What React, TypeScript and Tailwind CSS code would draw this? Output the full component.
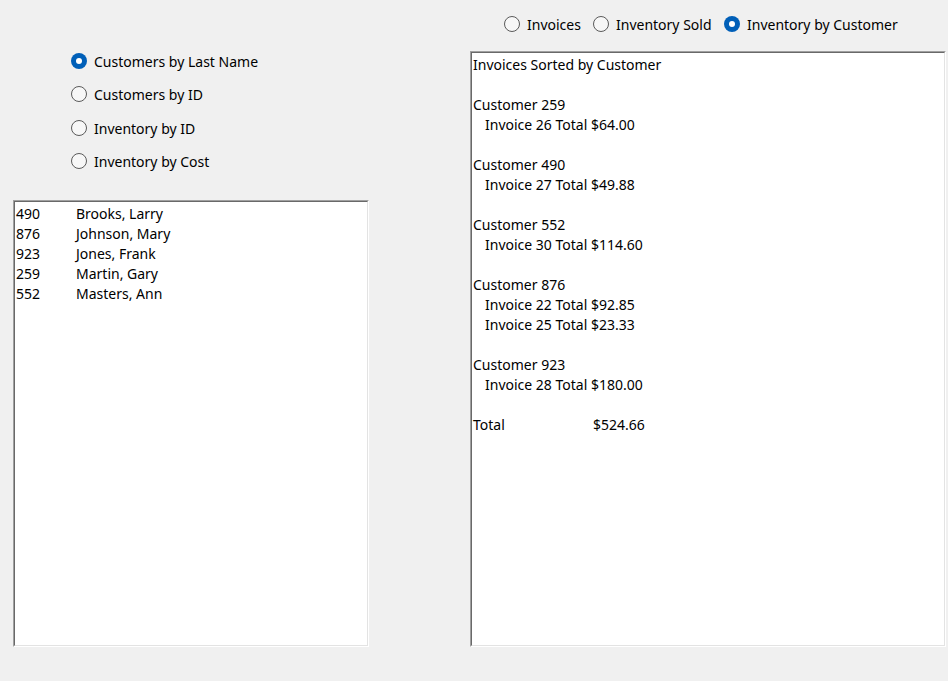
import React from "react";

function Radio({ checked, label, className = "" }: { checked?: boolean; label: string; className?: string }) {
  return (
    <div className={"flex items-center h-[20px] " + className}>
      {checked ? (
        <span className="w-[16px] h-[16px] rounded-full bg-[#005fb8] flex items-center justify-center shrink-0">
          <span className="w-[6px] h-[6px] rounded-full bg-white" />
        </span>
      ) : (
        <span className="w-[16px] h-[16px] rounded-full border border-[#5a5a5a] bg-[#f7f7f7] shrink-0" />
      )}
      <span className="ml-[7px] mt-[2px] whitespace-nowrap">{label}</span>
    </div>
  );
}

function Box({ className = "", children }: { className?: string; children?: React.ReactNode }) {
  return (
    <div className={"border border-t-[#a0a0a0] border-l-[#a0a0a0] border-r-white border-b-white " + className}>
      <div className="w-full h-full border border-t-[#696969] border-l-[#696969] border-r-[#e3e3e3] border-b-[#e3e3e3] bg-white px-[1px] pt-[2px]">
        {children}
      </div>
    </div>
  );
}

const customers = [
  ["490", "Brooks, Larry"],
  ["876", "Johnson, Mary"],
  ["923", "Jones, Frank"],
  ["259", "Martin, Gary"],
  ["552", "Masters, Ann"],
];

export default function App() {
  const lines: React.ReactNode[] = [
    <div key="h">Invoices Sorted by Customer</div>,
    <div key="e1">&nbsp;</div>,
    <div key="c1">Customer 259</div>,
    <div key="i1" className="pl-[12px]">Invoice 26 Total $64.00</div>,
    <div key="e2">&nbsp;</div>,
    <div key="c2">Customer 490</div>,
    <div key="i2" className="pl-[12px]">Invoice 27 Total $49.88</div>,
    <div key="e3">&nbsp;</div>,
    <div key="c3">Customer 552</div>,
    <div key="i3" className="pl-[12px]">Invoice 30 Total $114.60</div>,
    <div key="e4">&nbsp;</div>,
    <div key="c4">Customer 876</div>,
    <div key="i4" className="pl-[12px]">Invoice 22 Total $92.85</div>,
    <div key="i5" className="pl-[12px]">Invoice 25 Total $23.33</div>,
    <div key="e5">&nbsp;</div>,
    <div key="c5">Customer 923</div>,
    <div key="i6" className="pl-[12px]">Invoice 28 Total $180.00</div>,
    <div key="e6">&nbsp;</div>,
    <div key="t" className="flex">
      <span className="w-[120px]">Total</span>
      <span>$524.66</span>
    </div>,
  ];
  return (
    <div
      className="w-[948px] h-[681px] bg-[#f0f0f0] flex text-[14px] leading-[20px] text-black"
      style={{ fontFamily: '"Noto Sans", "Open Sans", sans-serif' }}
    >
      <div className="ml-[13px] w-[356px] flex flex-col">
        <div className="pl-[58px] mt-[51px] flex flex-col">
          <Radio checked label="Customers by Last Name" />
          <Radio label="Customers by ID" className="mt-[13px]" />
          <Radio label="Inventory by ID" className="mt-[14px]" />
          <Radio label="Inventory by Cost" className="mt-[13px]" />
        </div>
        <Box className="mt-[29px] w-[356px] h-[447px]">
          {customers.map(([id, name]) => (
            <div key={id} className="flex">
              <span className="w-[60px]">{id}</span>
              <span>{name}</span>
            </div>
          ))}
        </Box>
      </div>
      <div className="ml-[101px] w-[476px] flex flex-col">
        <div className="mt-[14px] pl-[34px] flex">
          <Radio label="Invoices" className="w-[89px]" />
          <Radio label="Inventory Sold" className="w-[131px]" />
          <Radio checked label="Inventory by Customer" />
        </div>
        <Box className="mt-[17px] w-[476px] h-[596px]">{lines}</Box>
      </div>
    </div>
  );
}
